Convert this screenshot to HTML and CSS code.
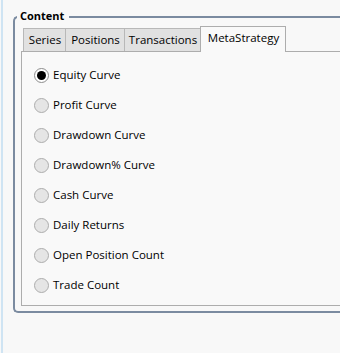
FILE: index.html
```html
<!DOCTYPE html>
<html>
<head>
<meta charset="utf-8">
<link rel="stylesheet" href="styles.css">
</head>
<body>
<div class="window">
  <div class="group">
    <div class="legend">Content</div>
    <div class="tabs">
      <div class="tab t-series">Series</div>
      <div class="tab t-positions">Positions</div>
      <div class="tab t-trans">Transactions</div>
      <div class="tab active t-meta">MetaStrategy</div>
    </div>
    <div class="panel">
      <div class="row"><span class="radio checked"></span><span class="label">Equity Curve</span></div>
      <div class="row"><span class="radio"></span><span class="label">Profit Curve</span></div>
      <div class="row"><span class="radio"></span><span class="label">Drawdown Curve</span></div>
      <div class="row"><span class="radio"></span><span class="label">Drawdown% Curve</span></div>
      <div class="row"><span class="radio"></span><span class="label">Cash Curve</span></div>
      <div class="row"><span class="radio"></span><span class="label">Daily Returns</span></div>
      <div class="row"><span class="radio"></span><span class="label">Open Position Count</span></div>
      <div class="row"><span class="radio"></span><span class="label">Trade Count</span></div>
    </div>
  </div>
</div>
</body>
</html>
```
FILE: styles.css
```css
html, body {
  margin: 0;
  padding: 0;
  background: #f8f8f8;
  overflow: hidden;
}
body {
  width: 340px;
  height: 353px;
  font-family: "Open Sans", "Noto Sans", sans-serif;
  font-size: 11.5px;
  color: #000;
}
.window {
  margin-left: 1px;
  border-left: 2px solid #cfe4f3;
  height: 353px;
  box-sizing: border-box;
  padding: 16px 0 0 10px;
}
.group {
  position: relative;
  border: 2px solid #7b8ba0;
  border-right: none;
  border-radius: 5px 0 0 5px;
  padding: 8px 0 5px 6px;
}
.legend {
  position: absolute;
  top: -10px;
  left: 2px;
  padding: 0 5px 0 3px;
  background: #f8f8f8;
  font-weight: 700;
  font-size: 11px;
  line-height: 16px;
}
.tabs {
  display: flex;
  align-items: flex-end;
  height: 25px;
  margin-left: 2px;
  position: relative;
  z-index: 1;
}
.tab {
  box-sizing: border-box;
  height: 23px;
  background: #e1e1e1;
  border: 1px solid #b8b8b8;
  border-bottom: none;
  text-align: center;
  line-height: 21px;
  margin-right: -1px;
  padding-left: 1px;
}
.t-series { width: 43px; }
.t-positions { width: 60px; }
.t-trans { width: 77px; }
.tab.active {
  width: 86px;
  height: 26px;
  background: #f9f9f9;
  border-color: #adadad;
  margin-bottom: -1px;
  line-height: 22px;
  padding-bottom: 3px;
}
.panel {
  border: 1px solid #adadad;
  border-right: none;
  padding: 8px 0 5px 12px;
  background: #f9f9f9;
}
.row {
  display: flex;
  align-items: center;
  height: 30px;
}
.radio {
  box-sizing: border-box;
  width: 15px;
  height: 15px;
  border-radius: 50%;
  border: 1px solid #adadad;
  background: #e5e5e5;
  margin-right: 4px;
  position: relative;
}
.radio.checked {
  border-color: #8c8c8c;
  background: #ffffff;
}
.radio.checked::after {
  content: "";
  position: absolute;
  left: 2px;
  top: 2px;
  width: 9px;
  height: 9px;
  border-radius: 50%;
  background: #000;
}
.label {
  line-height: 16px;
}
```
